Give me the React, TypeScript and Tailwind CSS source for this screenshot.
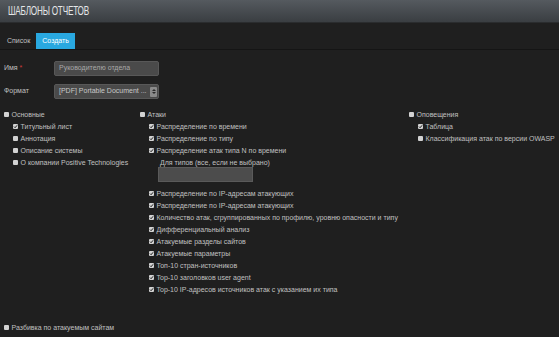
import React from 'react'

type Item = { label: string; checked?: boolean }

function Box({ checked }: { checked?: boolean }) {
  return (
    <span className="relative inline-flex w-[5px] h-[5px] shrink-0 bg-[#d2d2d2] rounded-[1px]">
      {checked && (
        <svg viewBox="0 0 10 10" className="absolute inset-0 w-[5px] h-[5px]">
          <path d="M2 5.2 L4.2 7.4 L8.2 2.6" fill="none" stroke="#1c1c1c" strokeWidth="2" />
        </svg>
      )}
    </span>
  )
}

function Row({ label, checked, sub }: Item & { sub?: boolean }) {
  return (
    <div className={`flex items-center gap-[2.5px] ${sub ? 'h-[12px] pl-[9px]' : 'h-[11px]'}`}>
      <Box checked={checked} />
      <span className="whitespace-nowrap leading-none">{label}</span>
    </div>
  )
}

const osnovnye: Item[] = [
  { label: 'Титульный лист', checked: true },
  { label: 'Аннотация' },
  { label: 'Описание системы' },
  { label: 'О компании Positive Technologies' },
]

const ataki1: Item[] = [
  { label: 'Распределение по времени', checked: true },
  { label: 'Распределение по типу', checked: true },
  { label: 'Распределение атак типа N по времени', checked: true },
]

const ataki2: Item[] = [
  { label: 'Распределение по IP-адресам атакующих', checked: true },
  { label: 'Распределение по IP-адресам атакующих', checked: true },
  { label: 'Количество атак, сгруппированных по профилю, уровню опасности и типу', checked: true },
  { label: 'Дифференциальный анализ', checked: true },
  { label: 'Атакуемые разделы сайтов', checked: true },
  { label: 'Атакуемые параметры', checked: true },
  { label: 'Топ-10 стран-источников', checked: true },
  { label: 'Top-10 заголовков user agent', checked: true },
  { label: 'Top-10 IP-адресов источников атак с указанием их типа', checked: true },
]

const opoveshcheniya: Item[] = [
  { label: 'Таблица', checked: true },
  { label: 'Классификация атак по версии OWASP' },
]

export default function App() {
  return (
    <div className="w-[559px] h-[337px] overflow-hidden flex flex-col bg-[#1f1f1f] text-[#c0c0c0] text-[7px] font-['Liberation_Sans',Arial,sans-serif]">
      {/* Заголовок */}
      <div className="h-[23px] shrink-0 flex items-center pl-[8px] bg-gradient-to-b from-[#555a5f] to-[#3a3e42] border-b border-[#2a2c2e]">
        <span className="inline-block text-[12px] text-[#e4e6e8] tracking-tight scale-x-[0.68] origin-left whitespace-nowrap">
          ШАБЛОНЫ ОТЧЕТОВ
        </span>
      </div>

      {/* Вкладки */}
      <div className="mt-[10px] h-[17px] shrink-0 flex items-stretch border-b border-[#151515] pl-[7px]">
        <span className="flex items-center pr-[6px]">Список</span>
        <span className="flex items-center px-[6px] bg-[#29a8e0] text-white">Создать</span>
      </div>

      {/* Форма */}
      <div className="mt-[11px] flex items-center h-[15px]">
        <span className="w-[54px] pl-[4px]">
          Имя <span className="text-[#d23a3a]">*</span>
        </span>
        <div className="w-[105px] h-[15px] flex items-center pl-[4px] bg-[#4a4a4a] border border-[#585858] rounded-[2px] text-[#a8a8a8]">
          Руководителю отдела
        </div>
      </div>
      <div className="mt-[8px] flex items-center h-[15px]">
        <span className="w-[54px] pl-[4px]">Формат</span>
        <div className="w-[105px] h-[15px] flex items-center justify-between pl-[4px] pr-[1px] bg-[#4a4a4a] border border-[#585858] rounded-[2px] text-[#c8c8c8]">
          <span className="whitespace-nowrap">[PDF] Portable Document ...</span>
          <span className="w-[7px] h-[10px] rounded-[1px] bg-[#8a8a8a] flex flex-col items-center justify-center gap-[1px]">
            <svg viewBox="0 0 6 3" className="w-[4px] h-[2px]"><path d="M0 3 L3 0 L6 3Z" fill="#2a2a2a" /></svg>
            <svg viewBox="0 0 6 3" className="w-[4px] h-[2px]"><path d="M0 0 L3 3 L6 0Z" fill="#2a2a2a" /></svg>
          </span>
        </div>
      </div>

      {/* Разделы */}
      <div className="mt-[10px] flex">
        <div className="w-[140px] pl-[4px]">
          <Row label="Основные" />
          {osnovnye.map((it, i) => (
            <Row key={i} {...it} sub />
          ))}
        </div>
        <div className="w-[269px]">
          <Row label="Атаки" />
          {ataki1.map((it, i) => (
            <Row key={i} {...it} sub />
          ))}
          <div className="pl-[18px] pt-[1px]">
            <div className="h-[10px] flex items-center pl-[2px] leading-none">Для типов (все, если не выбрано)</div>
            <div className="w-[95px] h-[15px] bg-[#4c4c4c] border border-[#5a5a5a]" />
          </div>
          <div className="mt-[5px]">
            {ataki2.map((it, i) => (
              <Row key={i} {...it} sub />
            ))}
          </div>
        </div>
        <div className="flex-1">
          <Row label="Оповещения" />
          {opoveshcheniya.map((it, i) => (
            <Row key={i} {...it} sub />
          ))}
        </div>
      </div>

      <div className="mt-auto pb-[4px] pl-[4px]">
        <div className="flex items-center gap-[2.5px] h-[12px]">
          <Box />
          <span className="leading-none">Разбивка по атакуемым сайтам</span>
        </div>
      </div>
    </div>
  )
}
